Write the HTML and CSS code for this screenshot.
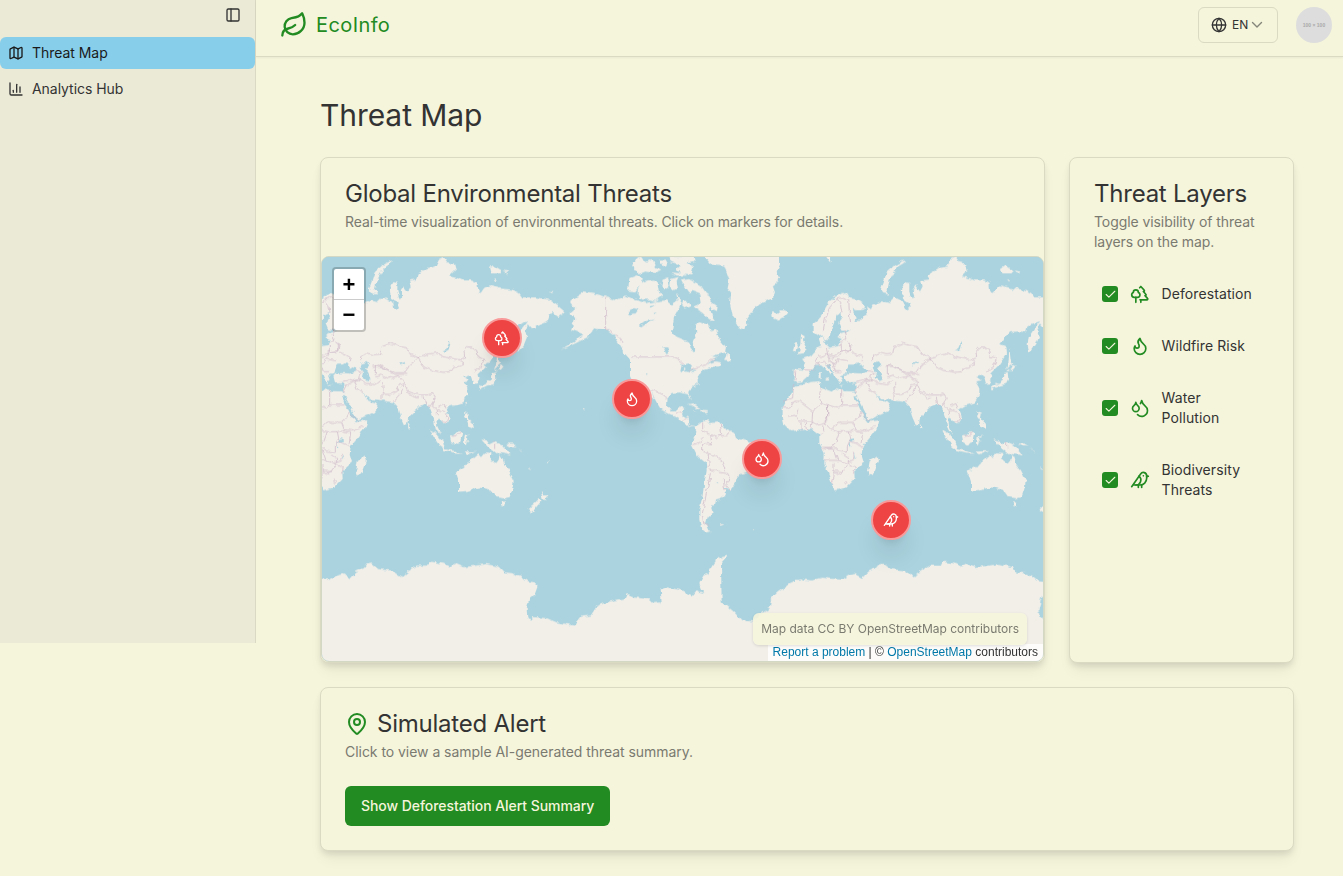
FILE: index.html
```html
<!DOCTYPE html>
<html lang="en">
<head>
<meta charset="utf-8">
<title>EcoInfo</title>
<link rel="stylesheet" href="styles.css">
</head>
<body>
<svg class="sprite" aria-hidden="true">
  <symbol id="trees" viewBox="0 0 24 24"><path d="M10 10v.2A3 3 0 0 1 8.9 16H5a3 3 0 0 1-1-5.8V10a3 3 0 0 1 6 0Z"/><path d="M7 16v6"/><path d="M13 19v3"/><path d="M12 19h8.3a1 1 0 0 0 .7-1.7L18 14h.3a1 1 0 0 0 .7-1.7L16 9h.2a1 1 0 0 0 .8-1.7L13 3l-1.4 1.5"/></symbol>
  <symbol id="flame" viewBox="0 0 24 24"><path d="M8.5 14.5A2.5 2.5 0 0 0 11 12c0-1.38-.5-2-1-3-1.072-2.143-.224-4.054 2-6 .5 2.5 2 4.9 4 6.5 2 1.6 3 3.5 3 5.5a7 7 0 1 1-14 0c0-1.153.433-2.294 1-3a2.5 2.5 0 0 0 2.5 2.5z"/></symbol>
  <symbol id="droplets" viewBox="0 0 24 24"><path d="M7 16.3c2.2 0 4-1.83 4-4.05 0-1.16-.57-2.26-1.71-3.19S7.29 6.75 7 5.3c-.29 1.45-1.14 2.84-2.29 3.76S3 11.1 3 12.25c0 2.22 1.8 4.05 4 4.05z"/><path d="M12.56 6.6A10.97 10.97 0 0 0 14 3.02c.5 2.5 2 4.9 4 6.5s3 3.5 3 5.5a6.98 6.98 0 0 1-11.91 4.97"/></symbol>
  <symbol id="bird" viewBox="0 0 24 24"><path d="M16 7h.01"/><path d="M3.4 18H12a8 8 0 0 0 8-8V7a4 4 0 0 0-7.28-2.3L2 20"/><path d="m20 7 2 .5-2 .5"/><path d="M10 18v3"/><path d="M14 17.75V21"/><path d="M7 18a6 6 0 0 0 3.84-10.61"/></symbol>
  <symbol id="check" viewBox="0 0 24 24"><path d="M20 6 9 17l-5-5"/></symbol>
</svg>

<div class="layout">
  <aside class="sidebar">
    <div class="sidebar-top">
      <svg class="icon i16" viewBox="0 0 24 24"><rect x="3" y="3" width="18" height="18" rx="2"/><path d="M9 3v18"/></svg>
    </div>
    <nav class="menu">
      <a class="menu-item active">
        <svg class="icon i16" viewBox="0 0 24 24"><path d="M14.106 5.553a2 2 0 0 0 1.788 0l3.659-1.83A1 1 0 0 1 21 4.619v12.764a1 1 0 0 1-.553.894l-4.553 2.277a2 2 0 0 1-1.788 0l-4.212-2.106a2 2 0 0 0-1.788 0l-3.659 1.83A1 1 0 0 1 3 19.381V6.618a1 1 0 0 1 .553-.894l4.553-2.277a2 2 0 0 1 1.788 0z"/><path d="M15 5.764v15"/><path d="M9 3.236v15"/></svg>
        <span>Threat Map</span>
      </a>
      <a class="menu-item">
        <svg class="icon i16" viewBox="0 0 24 24"><path d="M3 3v16a2 2 0 0 0 2 2h16"/><path d="M18 17V9"/><path d="M13 17V5"/><path d="M8 17v-3"/></svg>
        <span>Analytics Hub</span>
      </a>
    </nav>
  </aside>

  <div class="content">
    <header class="header">
      <div class="brand">
        <svg class="icon i28" viewBox="0 0 24 24"><path d="M11 20A7 7 0 0 1 9.8 6.1C15.5 5 17 4.48 19 2c1 2 2 4.18 2 8 0 5.5-4.78 10-10 10Z"/><path d="M2 21c0-3 1.85-5.36 5.08-6C9.5 14.52 12 13 13 12"/></svg>
        <span>EcoInfo</span>
      </div>
      <div class="header-right">
        <button class="lang">
          <svg class="icon i16" viewBox="0 0 24 24"><circle cx="12" cy="12" r="10"/><path d="M12 2a14.5 14.5 0 0 0 0 20 14.5 14.5 0 0 0 0-20"/><path d="M2 12h20"/></svg>
          <span>EN</span>
          <svg class="icon chevron" viewBox="0 0 24 24"><path d="m3 7 9 9 9-9"/></svg>
        </button>
        <div class="avatar">100 × 100</div>
      </div>
    </header>

    <main class="main">
      <h1 class="page-title">Threat Map</h1>
      <div class="grid">
        <section class="card map-card">
          <div class="card-header">
            <h2 class="card-title">Global Environmental Threats</h2>
            <p class="card-desc">Real-time visualization of environmental threats. Click on markers for details.</p>
          </div>
          <div class="map">
            <svg class="world" viewBox="6 21 2163 1212" preserveAspectRatio="none">
              <defs>
                <filter id="coast" x="0" y="0" width="2200" height="1260" filterUnits="userSpaceOnUse" color-interpolation-filters="sRGB">
                  <feTurbulence type="fractalNoise" baseFrequency=".06" numOctaves="2" seed="4" result="n"/>
                  <feDisplacementMap in="SourceGraphic" in2="n" scale="15" xChannelSelector="R" yChannelSelector="G"/>
                </filter>
                <g id="oldworld">
                  <g class="land">
                    <!-- Eurasia -->
                    <path d="M43 250L43 222 60 207 72 192 78 175 90 155 110 140 135 127 150 135 152 145 175 150 195 165 192 180 170 182 160 178 165 192 172 205 168 215 185 212 190 200 205 192 200 170 215 182 222 165 235 160 250 152 270 157 285 142 300 150 315 160 318 175 325 182 335 172 330 160 312 148 307 120 318 97 330 100 330 125 337 150 345 140 340 125 350 110 362 125 370 110 365 92 385 90 392 72 420 55 445 50 455 30 470 22 480 38 500 42 505 60 485 80 510 85 525 92 550 92 570 98 572 120 580 130 590 115 605 107 640 117 676 120 696 130 705 143 746 143 786 150 811 168 831 185 821 190 826 200 796 187 786 200 781 215 751 228 736 238 722 222 714 245 719 262 710 285 690 308 685 285 688 262 703 240 722 215 700 222 683 235 680 247 655 245 632 248 603 283 618 290 620 315 600 345 585 360 573 372 577 388 570 402 560 402 555 383 545 375 530 380 545 392 528 395 540 415 540 435 525 458 510 465 490 470 478 478 487 500 485 515 470 522 455 505 446 505 450 530 462 555 445 538 440 510 430 480 420 465 412 462 400 468 375 492 362 505 360 520 350 528 338 500 330 470 318 457 300 455 285 452 265 450 245 448 228 430 240 452 265 458 274 468 265 485 245 495 210 510 200 500 190 475 175 445 168 430 172 415 170 397 140 398 135 380 145 370 180 370 200 368 205 362 185 350 165 345 150 345 145 360 140 372 125 378 130 390 120 400 110 385 100 362 88 345 80 346 98 367 95 377 80 360 65 347 45 350 32 366 22 385 8 398-5 400-17 392-17 358 15 360 18 340 8 328 35 318 50 300 55 290 65 288 58 265 70 258 78 285 92 291 120 286 127 268 114 262 125 250 152 243 126 240 117 218 128 188 110 205 98 235 92 262 78 278 70 255 55 258Z"/>
                    <!-- Africa -->
                    <path d="M10 405L35 397 60 394 66 412 100 426 112 416 135 424 165 425 178 447 195 490 210 516 240 512 235 532 215 560 190 590 187 615 194 638 165 665 166 688 140 715 105 722 97 700 75 640 76 610 60 580 60 553 40 540 22 540 0 542-25 545-45 525-50 500-50 475-35 445-15 412Z"/>
                    <!-- Madagascar, British Isles, Novaya Zemlya, Arctic islands -->
                    <path d="M232 618l4 15-15 42-10 2-5-15 5-28zM5 253l8 3-2 16 8 12 6 18-10 8-22 4 8-12-2-10 4-8zM-15 285l6-6 5 8-4 15-12 2zM312 33l5 5-20 12-15 18-15 28-5 25 8 14-18-4-8-10 10-28 8-25 22-20zM605 55l12-8 12 8 12 8-8 8-24 0zM645 62l18 4-4 5zM785 124l14 0-6 6zM80 20l16 0-4 18zM620 85l12 5-4 5z"/>
                    <!-- Japan, Sakhalin, Taiwan, Sri Lanka, Philippines -->
                    <path d="M630 292l4 40 8 12-10 20-8-8 4-25zM625 365l16-5 8-10-12-5-10 8zM625 367l2 20-8 16-20 5-22 12-2-7 20-12 14-10 4-20zM536 455l4 12-6-4zM362 520l8 14-7 4zM535 485l9 4-2 18 14 14 4 18-16-8-6-20-8-10z"/>
                    <!-- Indonesia and New Guinea -->
                    <path d="M428 540l16 8 18 20 12 20-2 12-16-12-18-28zM470 598l34 6 20 8-22 0-32-8zM488 560l12-2 15-14 10 4-4 18-4 14-14 5-12-8zM532 560l12-3 8-2-14 10 6 10-6-2-2 16-6-12zM582 570l16 2 8 12 16-8 24 10 18 22 6 10-20-6-12-2-10 4-26-22zM528 606l40-2-26 10zM655 582l20 0 14 8-20 0zM692 594l14 14-4-2z"/>
                    <!-- Australia and New Zealand -->
                    <path d="M505 666l24-14 10-12 18-12 16-14 8 8 12-14 20 2-6 18 18 14 8-10 4-20 8 12 6 20 14 18 14 28-2 22-10 30-18 4-22-4-10-14-8-8-10-2-22-4-22 4-18 6-22 2 0-30zM640 756l14 0-4 14-8-2zM760 723l10 14 14 0-10 14-8-2zM754 748l6 7-18 24-10 9-12-8zM721 650l12 8-8-2zM780 638l8-6-4 8z"/>
                    <!-- Mediterranean and small islands -->
                    <path d="M58 368l6 0 0 20-6-2zM76 388l14-2-3 8zM118 406l16 0-8 3zM155 402l10-3-4 5z"/>
                  </g>
                  <g class="water">
                    <path d="M143 366l4-18 16-2 14-8 10 12 16 6 4 10-20 6-20-5-14 4zM222 342l16-5 8 10-10 10 8 14 6 18-10 6-14-10 4-16-10-14zM335 342l20-5 2 4-18 5zM466 303l12-6 9-22 3 3-6 22-10 6zM153 568l12-2 2 8-14 2zM112 195l14-8 2 14-14 20 4 20-12 12-14 16 2-24 10-28zM150 575l3 14-2 6-3-10zM168 610l3 16-3 6zM165 440l8 0 26 50 12 26-5 2-14-18z"/>
                  </g>
                  <g class="borders">
                    <path d="M72 240L78 208 90 175 112 148 135 143 148 150 150 190 154 220M112 148l12 18 4 22M135 240l5 30-15 8M126 282l0 24-24 14-12-6-14 2-10 4-10 0-6 16 12 14M81 290l4 26 12 10 20-5 8-14 28-3 0-24M120 308l34-5 4-16-14-10M158 308l34 15-4 14M45 352l15-12 20-2 10 12M92 320l0 18 16 4 8-14 30 5M100 338l8 28 20 0M205 362l20 6-10 12 0 14M170 398l30-8 20 4M168 430l12-24 20-12 10 24 20 14M200 390l12-4 20 14 30 5 22-18M220 330l0-12 20-8 20 5 20-2 4-22 26-10 20 6 24 4 14 22 26 12-26 20-16 24-28 0-14-4-30-15-16 0 0 26M392 325l16-5 22-8 16-2 20 10 34 8 16 2 14 10-14 10-20 4-8 12-20 2-36-6-22-10zM516 330l16-8-2-16 12-14 14 0 12 10 4 18 20 6-10 26-22 14M258 350l16-4 28 14 18 14 10 0 30 0M264 382l18-6 20 10 30-8 14 12 10 10-20 6-8 18-20 10-20 0-2-34M284 432l0 18M318 455l20-22 12-28M354 404l10 22 30 10 26 0 14-4 10 14-20 30M362 430l24 14 10 0M410 440l6 26M440 446l-4 22 14 12 0 16M450 470l20-8 6 14M452 480l20 6 10 14-4 16-14-2M-17 368l6 0-2 24M15 360l30 2M495 560l14-2 12-14M622 574l0 24"/>
                    <path d="M66 412l-6 30 5 18 50 15 12-10 0-45M127 466l48 0M0 455l40 30 25-20M0 455l-15 0-14 20-20 0M40 485l-2 30 12 10 35-10 0-50M-18 405l-2 40-30 10M-4 480l-6 16-24 4M-10 500l10 14 36 0M85 465l0 35-8 20 18 20 24-22 44 0 14-12 8-16 28 24M163 520l8 20 28 4 30-16M96 540l22 6 36 0 12-6M120 546l-10 28-12 22-30 0M150 546l4 20-10 24 0 18-26-4-20-18M168 545l22 4-4 28-2 8M150 572l38 20M76 598l28 0 12 34-40 0M104 640l0 44-6 16M116 632l30 10-12 20-16 12-10-6M146 638l20-10-4-18M130 614l18 12-2 14M150 642l18 10-6 20M104 664l30 2M136 696l5-5 5 5-5 5zM5 542l0-24M22 540l-4-22M35 538l4-24M62 556l12-10-4-22"/>
                  </g>
                </g>
                <path id="antarctica" class="land" d="M-110 447L-60 452-30 444-5 447 30 450 50 438 68 433 90 445 110 425 132 415 140 404 155 402 175 418 220 423 230 434 245 443 265 425 290 408 325 408 335 396 370 402 390 410 405 402 430 412 470 408 500 403 540 412 555 428 575 430 600 438 622 455 640 457 653 470 645 492 628 505 620 540 622 560 632 572 640 562 680 565 710 578 762 588 785 560 812 558 830 530 870 515 915 505 920 493 940 500 985 505 1000 520 1025 518 1022 478 1040 472 1085 482 1115 500 1130 482 1150 490 1138 462 1150 438 1165 432 1180 405 1195 382 1225 375 1203 400 1205 515 1240 545 1265 572 1300 575 1330 548 1350 535 1352 510 1370 490 1410 460 1440 447L1450 447 1450 760-110 760Z"/>
              </defs>
              <g filter="url(#coast)">
                <rect class="ocean" x="-50" y="-50" width="2400" height="1400"/>
                <use href="#oldworld" x="-98" y="-1"/>
                <use href="#oldworld" x="1438" y="-1"/>
                <use href="#antarctica" y="539"/>
                <use href="#antarctica" x="1536" y="539"/>
                <g transform="translate(718 -1)">
                  <g class="land">
                    <!-- The Americas -->
                    <path d="M45 145L75 125 105 130 140 143 170 152 200 138 225 150 260 160 290 155 320 152 335 165 355 150 350 130 365 150 362 168 345 200 338 245 350 260 385 275 395 300 405 305 400 275 412 255 408 225 420 218 445 225 455 245 470 240 480 265 500 292 497 308 455 320 475 322 440 345 470 335 485 338 480 350 455 352 430 360 415 385 415 402 392 420 390 430 398 452 385 434 360 428 340 430 325 445 323 470 335 485 350 485 358 470 375 476 368 497 385 503 388 525 410 530 430 515 445 512 450 520 480 518 500 538 525 550 530 565 565 575 600 590 600 625 565 665 538 675 530 695 515 720 497 716 500 735 480 750 467 752 465 765 455 775 460 790 445 805 440 825 446 840 458 845 440 848 425 835 420 810 420 780 428 750 435 700 442 660 440 640 415 620 397 585 400 570 412 545 405 530 385 528 360 507 335 495 305 480 290 455 275 422 285 448 270 440 250 415 222 400 212 380 212 330 195 310 180 285 165 260 140 240 115 238 105 235 85 262 50 280 0 302 45 275 75 255 35 240 48 205 30 190 48 175 32 158Z"/>
                    <path d="M-10 178l14 0 8 10-14 14-12-8z"/>
                    <!-- Greenland and Iceland -->
                    <path d="M435 18L452 42 495 48 510 90 505 115 516 130 512 160 520 200 540 235 555 240 565 205 580 185 600 165 640 145 647 128 640 108 660 92 652 65 662 45 662 10ZM638 188l14 2 10-8 16 0 6 10-10 12-18 6-16-8z"/>
                    <!-- Canadian Arctic -->
                    <path d="M210 85l22-8 22 12-10 14-16 22-22-2 2-18zM235 120l10-20 20-8 20-2 10 12 4 26 10 12-20 14-16-4-24 0-14-14zM310 90l14-4 4 26-14 10-8-16zM332 88l26-6-6 16 4 18-14 6-12-14zM365 92l24-4 14 8 22 12 14 20 12 10 8 20 16 12-2 14-22-10 8 26 8 12-18-4-24-22-22-14 24-12-4-26-26-10-10 4-14-20zM372 152l14 4 10 14-18 6-10-10zM218 48l12-20 20-6 8 16 22-10 10 24 16 8-18 10-30-4-20 8-8-14zM300 30l16 0 8 14-14 6zM330 18l72 0 4 16-22 4 18 14-6 22-28-2-16-10 12-12-30-14zM335 68l40 4 8 6-30 0zM500 320l2-16 10 14 2 18-20-6z"/>
                    <!-- Caribbean and southern islands -->
                    <path d="M382 464l18-3 24 15-8 2-16-10zM424 480l22 2-2 5-22 0zM402 482l9 2-8 2zM482 820l14 2-12 5zM580 838l8 6-4 2zM70 475l10 6-6 3z"/>
                  </g>
                  <g class="water">
                    <path d="M205 185l18-10 14 4-8 12-20 4zM242 225l18-14 26-4-20 12-20 14zM312 290l12 0 6 24-8 4zM365 345l20-6 14 14-10 14 2 2-12-4-2-14-8 18-6-4 4-18zM260 372l4 0 0 3-4 0zM386 368l14-10 12 0-10 8zM472 698l6 2-5 3zM270 170l20-4-14 8zM280 190l12-2-10 6z"/>
                  </g>
                  <g class="borders">
                    <path d="M139 145l0 95 12 0 14 15 16 8 8 18M218 322l120 0 18 8 16 12M386 366l20-10 30-10 14-14 18 0M272 420l28 8 24 20M350 495l10-10 8 6M372 512l10-6M430 518l0 24 24 14 4 26-28 0 0 24 16 2 4 38-8 10M455 556l20 8 12-12-4-30M480 558l24 0 10-12M446 610l22 8 18 14 10 24 0 8M450 662l18 0 12 6 26 4 5 20-12 14 14 14M455 662l-10 50-8 40-8 40 4 30 18 8M492 690l4 30M400 585l14-4 16-14"/>
                  </g>
                </g>
              </g>
            </svg>
            <div class="zoom-control"><span>+</span><span>−</span></div>
            <div class="marker m-forest"><svg class="icon i16"><use href="#trees"/></svg></div>
            <div class="marker m-fire"><svg class="icon i16"><use href="#flame"/></svg></div>
            <div class="marker m-water"><svg class="icon i16"><use href="#droplets"/></svg></div>
            <div class="marker m-bird"><svg class="icon i16"><use href="#bird"/></svg></div>
            <div class="attribution"><a>Report a problem</a> | © <a>OpenStreetMap</a> contributors</div>
            <div class="map-note">Map data CC BY OpenStreetMap contributors</div>
          </div>
        </section>

        <section class="card">
          <div class="card-header">
            <h2 class="card-title">Threat Layers</h2>
            <p class="card-desc">Toggle visibility of threat layers on the map.</p>
          </div>
          <ul class="layers">
            <li class="layer"><span class="checkbox"><svg class="icon"><use href="#check"/></svg></span><svg class="icon i20"><use href="#trees"/></svg><span class="layer-name">Deforestation</span></li>
            <li class="layer"><span class="checkbox"><svg class="icon"><use href="#check"/></svg></span><svg class="icon i20"><use href="#flame"/></svg><span class="layer-name">Wildfire Risk</span></li>
            <li class="layer"><span class="checkbox"><svg class="icon"><use href="#check"/></svg></span><svg class="icon i20"><use href="#droplets"/></svg><span class="layer-name">Water Pollution</span></li>
            <li class="layer"><span class="checkbox"><svg class="icon"><use href="#check"/></svg></span><svg class="icon i20"><use href="#bird"/></svg><span class="layer-name">Biodiversity Threats</span></li>
          </ul>
        </section>
      </div>

      <section class="card alert">
        <h2 class="card-title alert-title">
          <svg class="icon i24" viewBox="0 0 24 24"><path d="M20 10c0 4.993-5.539 10.193-7.399 11.799a1 1 0 0 1-1.202 0C9.539 20.193 4 14.993 4 10a8 8 0 0 1 16 0"/><circle cx="12" cy="10" r="3"/></svg>
          <span>Simulated Alert</span>
        </h2>
        <p class="card-desc">Click to view a sample AI-generated threat summary.</p>
        <button class="primary">Show Deforestation Alert Summary</button>
      </section>
    </main>
  </div>
</div>
</body>
</html>
```
FILE: styles.css
```css
* { box-sizing: border-box; }
body { margin: 0; height: 876px; overflow: hidden; background: #f5f5dc; color: #333; font: 14px/20px Inter, sans-serif; }
h1, h2, p, ul { margin: 0; padding: 0; font-weight: 400; }
button { font: inherit; color: inherit; }
.sprite { position: absolute; width: 0; height: 0; }
.icon { display: block; flex: none; fill: none; stroke: currentColor; stroke-width: 2; stroke-linecap: round; stroke-linejoin: round; }
.i16 { width: 16px; height: 16px; }
.i20 { width: 20px; height: 20px; }
.i24 { width: 24px; height: 24px; }
.i28 { width: 28px; height: 28px; }

.layout { display: flex; align-items: flex-start; }
.sidebar { width: 256px; height: 643px; flex: none; background: #ebead7; border-right: 1px solid #dadac4; }
.sidebar-top { display: flex; justify-content: flex-end; height: 37px; padding: 7px 14px 0 0; }
.menu { display: flex; flex-direction: column; gap: 4px; }
.menu-item { display: flex; align-items: center; gap: 8px; height: 32px; padding: 0 8px; border-radius: 6px; letter-spacing: -.04px; }
.menu-item.active { background: #87ceeb; color: #1a1a1a; }

.content { flex: 1; min-width: 0; }
.header { display: flex; justify-content: space-between; align-items: flex-start; height: 57px; padding: 7px 11px 0 24px; border-bottom: 1px solid #dadac2; box-shadow: 0 1px 2px rgba(0, 0, 0, .05); }
.brand { display: flex; align-items: center; gap: 8px; height: 36px; color: #228b22; font-size: 20px; letter-spacing: .4px; }
.header-right { display: flex; gap: 18px; }
.lang { display: flex; align-items: center; gap: 5px; width: 80px; height: 36px; padding: 0 12px; border: 1px solid #dadac2; border-radius: 6px; background: none; font-size: 12px; }
.chevron { width: 12px; height: 12px; margin-left: -2px; color: #85857a; stroke-width: 2.8; }
.avatar { display: flex; align-items: center; justify-content: center; width: 36px; height: 36px; border-radius: 50%; background: #ddd; color: #aaa; font: bold 5px/1 "Liberation Sans", sans-serif; }

.main { padding: 40px 49px 0 64px; }
.page-title { font-size: 30px; line-height: 36px; letter-spacing: -.08px; margin-bottom: 24px; }
.grid { display: grid; grid-template-columns: 725px 225px; gap: 24px; height: 506px; }
.card { border: 1px solid #dadac2; border-radius: 8px; background: #f5f5dc; box-shadow: 0 4px 6px -1px rgba(0, 0, 0, .1), 0 10px 15px -3px rgba(0, 0, 0, .06); }
.card-header { padding: 24px; }
.card-title { font-size: 24px; line-height: 24px; letter-spacing: -.23px; }
.card-desc { margin-top: 6px; color: #7a7a70; letter-spacing: -.08px; }

.map-card { display: flex; flex-direction: column; }
.map-card .card-header { height: 98px; }
.map-card .card-desc { letter-spacing: -.11px; }
.map { position: relative; flex: 1; overflow: hidden; border: 1px solid #d3d8c4; border-radius: 8px; background: #aad3df; }
.world { display: block; width: 100%; height: 100%; }
.ocean, .water { fill: #aad3df; }
.land { fill: #f2efe9; }
.borders { fill: none; stroke: #ceb9c8; stroke-width: 2.1; }
.zoom-control { position: absolute; left: 10px; top: 10px; width: 34px; border: 2px solid rgba(0, 0, 0, .2); border-radius: 4px; background: #fff; background-clip: padding-box; color: #000; font: bold 22px/30px "Liberation Sans", sans-serif; text-align: center; }
.zoom-control span { display: block; height: 30px; }
.zoom-control span:first-child { height: 31px; border-bottom: 1px solid #ccc; line-height: 31px; }
.marker { position: absolute; display: grid; place-items: center; width: 40px; height: 40px; border: 2px solid #f99a9a; border-radius: 50%; background: #ef4444; color: #fff; box-shadow: 0 20px 25px -5px rgba(0, 0, 0, .1), 0 8px 10px -6px rgba(0, 0, 0, .1); }
.m-forest { left: 160px; top: 61px; }
.m-fire { left: 290px; top: 122px; }
.m-water { left: 420px; top: 182px; }
.m-bird { left: 549px; top: 243px; }
.attribution { position: absolute; right: 0; bottom: 0; padding: 0 5px; background: rgba(255, 255, 255, .8); font: 12px/17px "Liberation Sans", sans-serif; white-space: nowrap; }
.attribution a { color: #0078a8; }
.map-note { position: absolute; right: 16px; bottom: 16px; padding: 8px; border-radius: 6px; background: rgba(245, 245, 220, .9); color: #7a7a70; font-size: 12px; line-height: 16px; letter-spacing: -.02px; white-space: nowrap; box-shadow: 0 1px 3px rgba(0, 0, 0, .12); }

.layers { display: flex; flex-direction: column; gap: 16px; padding: 0 24px; list-style: none; }
.layer { display: flex; align-items: center; padding: 8px; }
.layer > .i20 { margin: 0 11.5px 0 12px; color: #228b22; }
.layer-name { letter-spacing: .1px; }
.checkbox { display: grid; place-items: center; flex: none; width: 16px; height: 16px; border-radius: 3px; background: #228b22; color: #f5f5dc; }
.checkbox .icon { width: 13px; height: 13px; }

.alert { height: 164px; margin-top: 24px; padding: 24px; }
.alert .card-desc { letter-spacing: -.04px; }
.alert-title { display: flex; align-items: center; gap: 8px; }
.alert-title .icon { color: #228b22; }
.primary { display: block; height: 40px; margin-top: 24px; padding: 0 16px; border: 0; border-radius: 6px; background: #228b22; color: #f5f5dc; font-weight: 500; letter-spacing: -.06px; }
```
